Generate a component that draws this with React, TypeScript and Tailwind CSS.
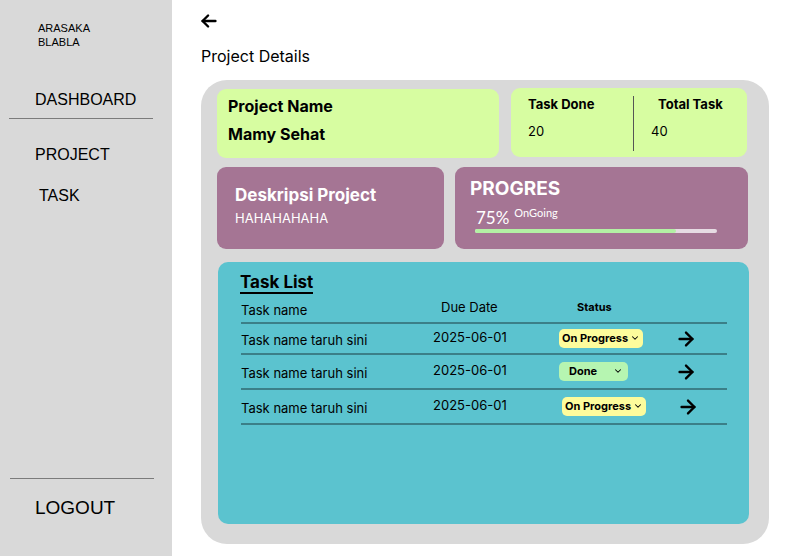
import { ArrowRight, ChevronDown } from "lucide-react"

const tasks = [
  { name: "Task name taruh sini", date: "2025-06-01", status: "On Progress" },
  { name: "Task name taruh sini", date: "2025-06-01", status: "Done" },
  { name: "Task name taruh sini", date: "2025-06-01", status: "On Progress" },
]

const Sidebar = () => {
  return (
    <aside className="w-[172px] h-full bg-[#d9d9d9] flex flex-col font-['Liberation_Sans',Arial,sans-serif] text-black shrink-0">
      <div className="pl-[38px] pt-[21px] text-[11px] leading-[14px]">
        <p>ARASAKA</p>
        <p>BLABLA</p>
      </div>
      <p className="pl-[35px] mt-[40px] text-[16px] leading-[22px]">DASHBOARD</p>
      <div className="ml-[9px] mt-[7px] w-[144px] border-t border-[#7b7b7b]"></div>
      <p className="pl-[35px] mt-[25px] text-[16px] leading-[22px]">PROJECT</p>
      <p className="pl-[39px] mt-[19px] text-[16px] leading-[22px]">TASK</p>
      <div className="mt-auto ml-[10px] w-[144px] border-t border-[#7b7b7b]"></div>
      <p className="pl-[35px] mt-[17px] mb-[36px] text-[19px] leading-[24px]">LOGOUT</p>
    </aside>
  )
}

const StatusPill = ({ status }: { status: string }) => {
  const done = status === "Done"
  return (
    <div
      className={`inline-flex items-center rounded-[5px] h-[19px] text-[11px] font-bold ${
        done ? "bg-[#b6f5b1] w-[69px] pl-[10px] gap-x-[16px]" : "bg-[#fdfc9c] px-[3px] gap-x-[2px]"
      }`}
    >
      <span>{status}</span>
      <ChevronDown size={10} strokeWidth={2.5} />
    </div>
  )
}

export default function App() {
  return (
    <div className="flex w-[787px] h-[556px] bg-white font-['Inter',sans-serif] text-black overflow-hidden">
      <Sidebar />
      <main className="flex-1 pl-[29px] pt-[10px]">
        <svg width="22" height="22" viewBox="0 0 24 24" fill="none" stroke="currentColor" strokeWidth="2.6" strokeLinecap="round" strokeLinejoin="round" className="-ml-[3px]">
          <path d="M19 12H5" />
          <path d="M11 6l-6 6 6 6" />
        </svg>
        <h1 className="mt-[13px] text-[16px] leading-[22px]">Project Details</h1>
        <section className="mt-[13px] w-[568px] h-[464px] rounded-[26px] bg-[#d9d9d9] pl-[16px] pt-[8px]">
          <div className="flex gap-x-[12px]">
            <div className="w-[282px] h-[69px] mt-[1px] rounded-[9px] bg-[#d7fda1] pl-[11px] pt-[7px] font-bold text-[16px] leading-[20px]">
              <p>Project Name</p>
              <p className="mt-[8px]">Mamy Sehat</p>
            </div>
            <div className="w-[236px] h-[69px] rounded-[9px] bg-[#d7fda1] flex text-[13px]">
              <div className="w-[122px] pl-[17px] pt-[7px]">
                <p className="font-bold leading-[18px]">Task Done</p>
                <p className="mt-[9px] leading-[18px]">20</p>
              </div>
              <div className="mt-[8px] h-[55px] border-l border-[#555]"></div>
              <div className="pt-[7px]">
                <p className="pl-[24px] font-bold leading-[18px]">Total Task</p>
                <p className="pl-[17px] mt-[9px] leading-[18px]">40</p>
              </div>
            </div>
          </div>
          <div className="flex gap-x-[11px] mt-[9px]">
            <div className="w-[227px] h-[82px] rounded-[9px] bg-[#a57594] text-white pl-[18px] pt-[17px]">
              <p className="font-bold text-[17px] leading-[22px]">Deskripsi Project</p>
              <p className="mt-[4px] text-[13px] leading-[16px]">HAHAHAHAHA</p>
            </div>
            <div className="w-[293px] h-[82px] rounded-[9px] bg-[#a57594] text-white pl-[15px] pt-[10px]">
              <p className="font-bold text-[19px] leading-[24px]">PROGRES</p>
              <div className="pl-[6px] flex items-start gap-x-[5px] font-['Lato',sans-serif] mt-[7px]">
                <span className="text-[17px] leading-[20px]">75%</span>
                <span className="text-[11px] leading-[14px] -mt-[2px]">OnGoing</span>
              </div>
              <div className="ml-[5px] mt-[1px] w-[242px] h-[4px] rounded-full bg-[#e6dbe3]">
                <div className="h-full rounded-full bg-[#b3f1a4]" style={{ width: "83%" }}></div>
              </div>
            </div>
          </div>
          <div className="mt-[13px] ml-[1px] w-[531px] h-[262px] rounded-[10px] bg-[#5bc3cf] pl-[22px] pt-[8px]">
            <h2 className="inline-block font-bold text-[17px] leading-[20px] border-b-2 border-black">Task List</h2>
            <div className="w-[486px] ml-[1px]">
              <div className="flex h-[30px] border-b-2 border-[#3b7f88] text-[13px]">
                <span className="w-[200px] pt-[7px]">Task name</span>
                <span className="w-[136px] pt-[4px]">Due Date</span>
                <span className="pt-[5px] font-bold text-[11px]">Status</span>
              </div>
              {tasks.map((t, i) => (
                <div key={i} className={`flex items-center border-b-2 border-[#3b7f88] text-[13px] ${i === 0 ? "h-[31px]" : "h-[35px]"}`}>
                  <span className="w-[192px] pt-[5px]">{t.name}</span>
                  <span className={`${i === 2 ? "w-[129px]" : "w-[126px]"} -mt-[2px]`}>{t.date}</span>
                  <div className={`${i === 2 ? "w-[115px]" : "w-[116px]"} -mt-[1px] flex`}>
                    <StatusPill status={t.status} />
                  </div>
                  <ArrowRight size={22} strokeWidth={2.6} />
                </div>
              ))}
            </div>
          </div>
        </section>
      </main>
    </div>
  )
}
